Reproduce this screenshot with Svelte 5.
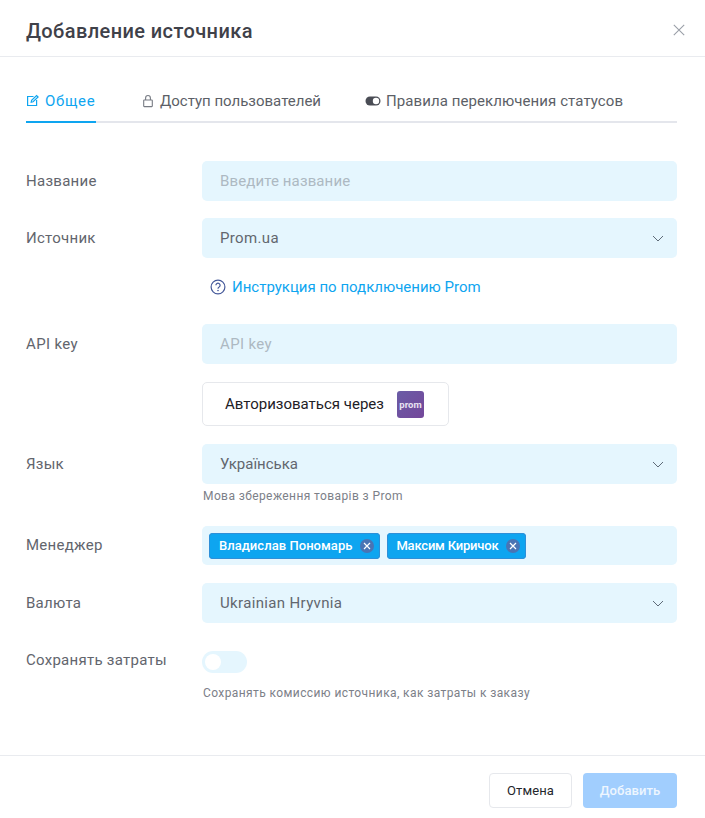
<script>
  const chevron = 'M1 1l5 5 5-5';
</script>

<div class="modal">
  <header class="head">
    <h1>Добавление источника</h1>
    <button class="close" aria-label="Закрыть">
      <svg width="12" height="12" viewBox="0 0 12 12"><path d="M.8.8l10.4 10.4M11.2.8L.8 11.2" stroke="#9a9fa8" stroke-width="1.1" fill="none"/></svg>
    </button>
  </header>

  <nav class="tabs">
    <div class="tab active">
      <svg width="13" height="13" viewBox="0 0 13 13" fill="none" stroke="#0ea5f0" stroke-width="1.2"><path d="M7.5 2.5H1.6v9h9V6"/><path d="M5.2 8.2l.4-1.9 5-4.8 1.5 1.5-5 4.8z"/></svg>
      <span>Общее</span>
    </div>
    <div class="tab t2">
      <svg width="12" height="14" viewBox="0 0 12 14" fill="none" stroke="#777b83" stroke-width="1.1"><rect x="1.7" y="6" width="8.6" height="6.6" rx=".6"/><path d="M3.6 6V3.9a2.4 2.4 0 0 1 4.8 0V6"/></svg>
      <span>Доступ пользователей</span>
    </div>
    <div class="tab t3">
      <svg width="16" height="10" viewBox="0 0 16 10"><rect x=".5" y=".5" width="15" height="9" rx="4.5" fill="#4a4d55"/><circle cx="11" cy="5" r="3.2" fill="#fff"/></svg>
      <span>Правила переключения статусов</span>
    </div>
  </nav>

  <div class="form">
    <div class="row r1">
      <span class="label">Название</span>
      <div class="field placeholder">Введите название</div>
    </div>
    <div class="row r2">
      <span class="label">Источник</span>
      <div class="field select latin">Prom.ua
        <svg width="12" height="7" viewBox="0 0 12 7" fill="none" stroke="#5f6b78" stroke-width="1"><path d={chevron}/></svg>
      </div>
    </div>
    <div class="row r3">
      <span></span>
      <div class="link">
        <svg width="16" height="16" viewBox="0 0 16 16" fill="none" stroke="#45599a" stroke-width="1.2"><circle cx="8" cy="8" r="6.9"/><path d="M5.9 6.3a2.1 2.1 0 1 1 3.2 1.8c-.7.4-1.1.8-1.1 1.6"/><circle cx="8" cy="11.6" r=".5" fill="#45599a" stroke-width=".6"/></svg>
        <span>Инструкция по подключению Prom</span>
      </div>
    </div>
    <div class="row r4">
      <span class="label latin">API key</span>
      <div class="field placeholder latin">API key</div>
    </div>
    <div class="row r5">
      <span></span>
      <div class="auth">
        <span>Авторизоваться через</span>
        <span class="prom">prom</span>
      </div>
    </div>
    <div class="row r6">
      <span class="label">Язык</span>
      <div class="field select">Українська
        <svg width="12" height="7" viewBox="0 0 12 7" fill="none" stroke="#5f6b78" stroke-width="1"><path d={chevron}/></svg>
      </div>
    </div>
    <div class="row r7">
      <span></span>
      <div class="hint">Мова збереження товарів з Prom</div>
    </div>
    <div class="row r8">
      <span class="label">Менеджер</span>
      <div class="field tags">
        <span class="tag first">Владислав Пономарь
          <span class="x"><svg width="8" height="8" viewBox="0 0 8 8"><path d="M1 1l6 6M7 1L1 7" stroke="#fff" stroke-width="1.2"/></svg></span>
        </span>
        <span class="tag second">Максим Киричок
          <span class="x"><svg width="8" height="8" viewBox="0 0 8 8"><path d="M1 1l6 6M7 1L1 7" stroke="#fff" stroke-width="1.2"/></svg></span>
        </span>
      </div>
    </div>
    <div class="row r9">
      <span class="label">Валюта</span>
      <div class="field select latin">Ukrainian Hryvnia
        <svg width="12" height="7" viewBox="0 0 12 7" fill="none" stroke="#5f6b78" stroke-width="1"><path d={chevron}/></svg>
      </div>
    </div>
    <div class="row r10">
      <span class="label">Сохранять затраты</span>
      <div class="toggle"><i></i></div>
    </div>
    <div class="row r11">
      <span></span>
      <div class="hint">Сохранять комиссию источника, как затраты к заказу</div>
    </div>
  </div>

  <footer class="foot">
    <button class="btn cancel">Отмена</button>
    <button class="btn add">Добавить</button>
  </footer>
</div>

<style>
  :global(body) { margin: 0; background: #fff; }
  .modal {
    width: 705px; height: 818px; display: flex; flex-direction: column;
    font-family: Roboto, "Liberation Sans", sans-serif; color: #5c5f67; font-size: 15px; box-sizing: border-box;
  }
  .head {
    height: 57px; box-sizing: border-box; border-bottom: 1px solid #e9ebef;
    display: flex; align-items: center; justify-content: space-between; padding: 8px 20px 2px 26px;
  }
  h1 { margin: 0; font-size: 20px; font-weight: 500; color: #3f4149; letter-spacing: .4px; }
  .close { background: none; border: 0; padding: 0; display: flex; margin-top: -2px; }
  .tabs {
    margin: 23px 28px 0 26px; height: 43px; box-sizing: border-box; border-bottom: 2px solid #e4e6ec;
    display: flex;
  }
  .tab { display: flex; align-items: center; gap: 6px; height: 43px; box-sizing: border-box; padding-bottom: 1px; color: #5c5f67; white-space: nowrap; }
  .tab.active { color: #0ea5f0; border-bottom: 2px solid #0ea5f0; width: 70px; gap: 6px; letter-spacing: .7px; padding-bottom: 0; }
  .t2 { margin-left: 46px; gap: 6px; }
  .t3 { margin-left: 44px; gap: 5px; letter-spacing: .08px; }
  .form { padding: 38px 28px 0 26px; flex: 1; }
  .row { display: grid; grid-template-columns: 176px 475px; }
  .label { line-height: 39px; padding-top: 1px; color: #62656d; white-space: nowrap; letter-spacing: .27px; }
  .field {
    height: 40px; box-sizing: border-box; background: #e5f6fe; border-radius: 5px;
    display: flex; align-items: center; padding: 0 18px; color: #62666e;
  }
  .placeholder { color: #adb9c2; letter-spacing: .12px; }
  .select { justify-content: space-between; padding-right: 13px; }
  .latin.latin { letter-spacing: .35px; }
  .r2 { margin-top: 17px; }
  .r3 { height: 20px; margin-top: 19px; margin-bottom: 27px; }
  .link { display: flex; align-items: center; gap: 6px; color: #0ea5f0; padding-left: 8px; }
  .auth {
    margin-top: 18px; width: 247px; height: 44px; box-sizing: border-box; border: 1px solid #e6e8ec; border-radius: 5px;
    display: flex; align-items: center; padding: 0 24px 0 22px; justify-content: space-between; color: #1e2026;
  }
  .prom {
    width: 27px; height: 27px; border-radius: 3px; background: linear-gradient(135deg, #6a5ca6, #74479a); color: #e8e2f2;
    font-size: 9.5px; font-weight: 700; display: flex; align-items: center; justify-content: center;
  }
  .r6 { margin-top: 18px; }
  .hint { font-size: 12px; color: #7c8088; line-height: 14px; padding-left: 1px; letter-spacing: .4px; }
  .r7 { margin-top: 5px; }
  .r8 { margin-top: 23px; }
  .r8 .label { line-height: 37px; }
  .tags { height: 39px; padding: 0 7px; gap: 7px; }
  .tag {
    height: 26px; box-sizing: border-box; background: #0ea5f0; border-radius: 4px; color: #fff; font-weight: 500;
    font-size: 13px; display: flex; align-items: center; padding: 0 6px 0 10px; gap: 7px; letter-spacing: .05px;
    box-shadow: inset 0 0 0 1px #2e8fd8;
  }
  .first { gap: 8px; }
  .second { letter-spacing: -.2px; gap: 8px; padding-left: 9px; }
  .x {
    width: 14px; height: 14px; border-radius: 50%; background: #4a74b4; display: flex; align-items: center; justify-content: center;
  }
  .r9 { margin-top: 18px; }
  .r10 { margin-top: 18px; height: 32px; }
  .r10 .label { line-height: 38px; padding-top: 0; }
  .toggle { margin-top: 10px; width: 45px; height: 22px; background: #e5f6fe; border-radius: 11px; position: relative; }
  .toggle i { position: absolute; left: 3px; top: 3px; width: 16px; height: 16px; border-radius: 50%; background: #fff; }
  .r11 { margin-top: 11px; padding-top: 2px; }
  .foot {
    height: 63px; box-sizing: border-box; border-top: 1px solid #e9ebef;
    display: flex; justify-content: flex-end; gap: 11px; padding: 17px 28px 0 0;
  }
  .btn { height: 35px; border-radius: 4px; font-family: inherit; font-size: 13px; letter-spacing: .1px; padding: 0; }
  .cancel { width: 83px; background: #fff; border: 1px solid #e6e8ec; color: #24262c; }
  .add { width: 94px; background: #a1cefe; border: 0; color: #eef6ff; font-weight: 500; }
</style>
